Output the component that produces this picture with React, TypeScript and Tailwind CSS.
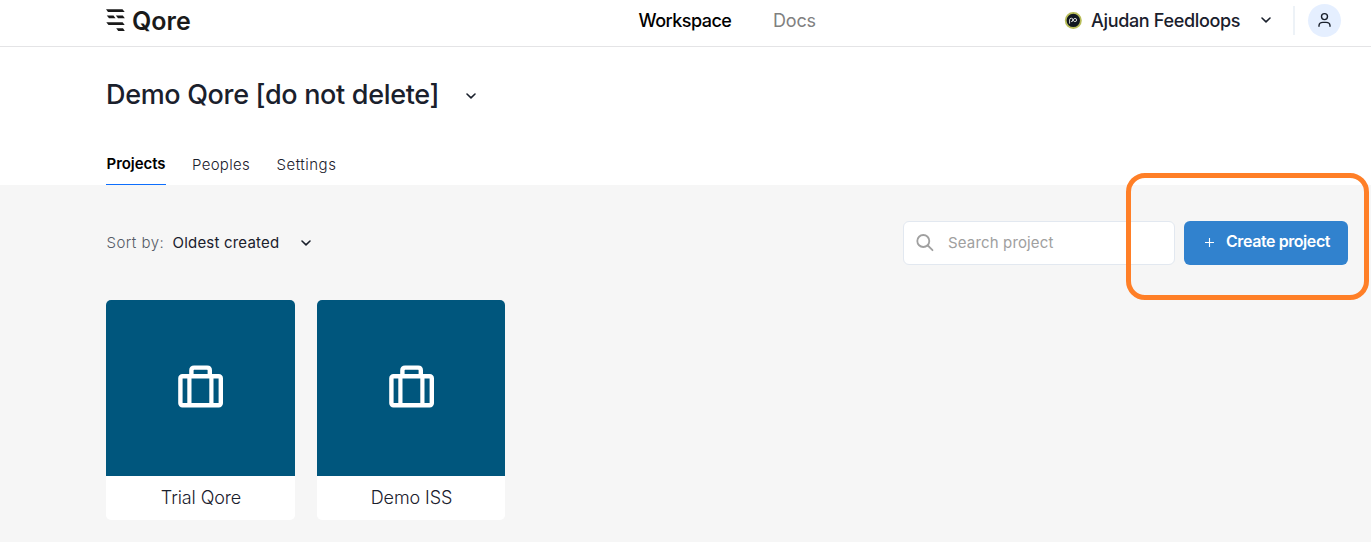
import React from "react";

function Chevron({ className = "" }: { className?: string }) {
  return (
    <svg className={`shrink-0 ${className}`} width="12" height="8" viewBox="0 0 12 8" fill="none" stroke="#1a202c" strokeWidth="1.6" strokeLinecap="round" strokeLinejoin="round">
      <path d="M2 2 L6 5.8 L10 2" />
    </svg>
  );
}

function LogoMark() {
  return (
    <svg className="shrink-0" width="20" height="24" viewBox="0 0 20 24" fill="#1a1a1a">
      <path d="M0 1.2H16.5L18.7 4H2Z" />
      <path d="M0.8 7.5H7.5L9.5 10.3H3Z" />
      <path d="M9.9 7.5H16.8L18.8 10.3H12Z" />
      <path d="M0.3 14.2H16.6L18.7 17H2.5Z" />
      <path d="M10.2 20.2H17L18.8 23H12.2Z" />
    </svg>
  );
}

function Suitcase() {
  return (
    <svg width="46" height="44" viewBox="0 0 46 44" fill="none" stroke="#fff" strokeWidth="4.4" strokeLinejoin="round">
      <rect x="2.4" y="11.2" width="40.4" height="29" rx="2" />
      <path d="M13.4 11V5.2Q13.4 2.6 16 2.6H29.2Q31.8 2.6 31.8 5.2V11" />
      <path d="M11.4 11V40M33.4 11V40" strokeWidth="4.2" />
    </svg>
  );
}

function Project({ name, className }: { name: string; className: string }) {
  return (
    <div className={`flex h-[220px] flex-col overflow-hidden rounded-[5px] bg-white ${className}`}>
      <div className="flex h-[176px] items-center justify-center bg-[#00567d] pb-[3px] pl-px">
        <Suitcase />
      </div>
      <div className="flex h-[44px] items-center justify-center pb-px pl-px text-[18px] font-light tracking-[-0.1px] text-[#1a202c]">{name}</div>
    </div>
  );
}

export default function App() {
  return (
    <div className="relative h-[542px] w-[1371px] overflow-hidden bg-[#f6f6f6] font-['Inter',sans-serif] whitespace-nowrap text-[#1a202c]">
      <header className="flex h-[47px] items-center border-b border-[#e4e4e6] bg-white pb-[6px] pl-[106px]">
        <div className="flex w-[532px] items-center">
          <LogoMark />
          <span className="ml-[6px] pt-px text-[25px] leading-6 font-semibold tracking-[0px] text-[#1a1a1a]">Qore</span>
        </div>
        <nav className="flex w-[426px] text-[18px] leading-[27px]">
          <span className="w-[135px] pl-[0.5px] font-medium tracking-[-0.52px] text-black">Workspace</span>
          <span className="tracking-[-0.2px] text-[#808080]">Docs</span>
        </nav>
        <svg className="shrink-0" width="18" height="18" viewBox="0 0 18 18" fill="none">
          <circle cx="9.3" cy="9.4" r="7.6" fill="#111820" stroke="#b8bd59" strokeWidth="1.8" />
          <path d="M5.6 12.6V8.9a1.7 1.7 0 1 1 1.8 1.7C9 10.6 9 7.4 11 7.4a1.6 1.6 0 1 1 0 3.2C9.6 10.6 9.3 9.4 8.8 8.4" stroke="#e8e8e8" strokeWidth=".9" />
        </svg>
        <span className="ml-[9px] w-[169px] text-[18px] leading-[27px] font-medium tracking-[-0.33px]">Ajudan Feedloops</span>
        <Chevron />
        <div className="ml-[21px] h-[29px] w-[2px] bg-[#edf2f7]" />
        <div className="ml-[13px] flex h-[33px] w-[33px] items-center justify-center rounded-full bg-[#e5efff]">
          <svg width="14" height="16" viewBox="0 0 14 16" fill="none" stroke="#1a202c" strokeWidth="1.4" strokeLinecap="round">
            <circle cx="6.5" cy="4.6" r="3" />
            <path d="M1 14.2V13.5Q1.3 10.4 4.8 10.4H8.2Q11.7 10.4 12 13.5V14.2" />
          </svg>
        </div>
      </header>

      <section className="flex h-[138px] flex-col bg-white pl-[106px]">
        <div className="flex h-[97px] items-center">
          <h1 className="w-[359px] text-[27px] font-medium tracking-[-0.33px]">Demo Qore [do not delete]</h1>
          <Chevron />
        </div>
        <div className="flex h-[41px] text-[15px]">
          <span className="mr-[26px] w-[60px] border-b border-[#0d6efd] pt-[8px] pl-[0.5px] leading-6 font-semibold tracking-[-0.05px] text-black">Projects</span>
          <span className="w-[84px] pt-[9px] leading-6 font-light tracking-[0.3px]">Peoples</span>
          <span className="pt-[9px] pl-[0.5px] leading-6 font-light tracking-[0.5px]">Settings</span>
        </div>
      </section>

      <div className="flex h-[115px] items-center pl-[106px] text-[15px]">
        <span className="w-[66px] pt-px pl-[0.5px] font-light tracking-[0.45px] text-[#555b66]">Sort by:</span>
        <span className="w-[128px] pt-px pl-[0.5px] tracking-[0.2px]">Oldest created</span>
        <Chevron />
        <div className="ml-[591px] flex h-[44px] w-[272px] items-center rounded-[6px] border border-[#e2e8f0] bg-white">
          <svg className="ml-[11.5px]" width="18" height="18" viewBox="0 0 18 18" fill="none" stroke="#a0a0a0" strokeWidth="1.8" strokeLinecap="round">
            <circle cx="7.3" cy="7" r="6" />
            <path d="M11.8 11.5L16.5 16.2" />
          </svg>
          <span className="ml-[14.5px] pt-px tracking-[0.15px] text-[#a0a0a0]">Search project</span>
        </div>
        <button className="ml-[9px] flex h-[44px] w-[164px] items-center rounded-[6px] bg-[#3182ce] pl-[20px] text-white">
          <svg width="11" height="11" viewBox="0 0 11 11" stroke="#fff" strokeWidth="1.1">
            <path d="M5.5 1V10M1 5.5H10" />
          </svg>
          <span className="ml-[11px] pb-[3px] text-[16px] font-semibold tracking-[-0.42px]">Create project</span>
        </button>
      </div>

      <main className="flex gap-[22px] pl-[106px]">
        <Project name="Trial Qore" className="w-[189px]" />
        <Project name="Demo ISS" className="w-[188px]" />
      </main>

      <div className="pointer-events-none absolute top-[173px] left-[1126px] h-[127px] w-[243px] rounded-[19px] border-[5px] border-[#ff7f27]" />
    </div>
  );
}
